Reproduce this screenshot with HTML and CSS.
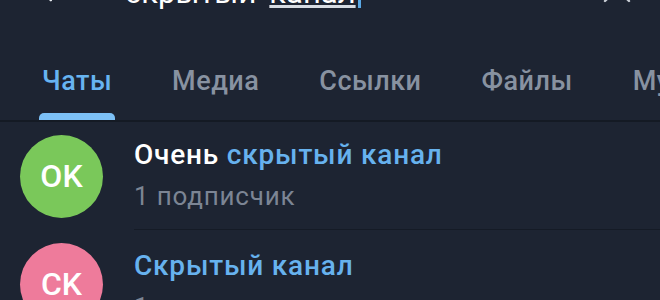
FILE: index.html
```html
<!DOCTYPE html>
<html lang="ru">
<head>
<meta charset="utf-8">
<link rel="stylesheet" href="styles.css">
</head>
<body>
<div class="page">
  <div class="header">
    <div class="bar">
      <svg class="back" width="28" height="28" viewBox="0 0 24 24"><path d="M20 12H4M11 5l-7 7 7 7" fill="none" stroke="#e8ecf1" stroke-width="2" stroke-linecap="round" stroke-linejoin="round"/></svg>
      <div class="query">скрытый <span class="under">канал</span><span class="cursor"></span></div>
      <svg class="clear" width="36" height="36" viewBox="0 0 24 24"><path d="M4 4l16 16M20 4L4 20" fill="none" stroke="#c9ced6" stroke-width="1.6" stroke-linecap="round"/></svg>
    </div>
  </div>
  <div class="tabs">
    <div class="tab active"><span class="tab-label">Чаты</span><span class="indicator"></span></div>
    <div class="tab"><span class="tab-label">Медиа</span></div>
    <div class="tab"><span class="tab-label">Ссылки</span></div>
    <div class="tab"><span class="tab-label">Файлы</span></div>
    <div class="tab"><span class="tab-label">Музыка</span></div>
  </div>
  <div class="list">
    <div class="row">
      <div class="avatar green">OK</div>
      <div class="info">
        <div class="title">Очень <span class="hl">скрытый канал</span></div>
        <div class="sub">1 подписчик</div>
      </div>
    </div>
    <div class="row">
      <div class="avatar pink">CK</div>
      <div class="info second">
        <div class="title"><span class="hl">Скрытый канал</span></div>
        <div class="sub">1 подписчик</div>
      </div>
    </div>
  </div>
</div>
</body>
</html>
```
FILE: styles.css
```css
* { box-sizing: border-box; }
html, body { margin: 0; padding: 0; }
body {
  width: 660px;
  height: 300px;
  overflow: hidden;
  background: #1d2432;
  font-family: Roboto, "Noto Sans", sans-serif;
}
.page { width: 660px; }
.header {
  height: 12px;
  overflow: hidden;
}
.bar {
  height: 60px;
  margin-top: -37px;
  display: flex;
  align-items: center;
  padding-left: 38px;
}
.back { flex: none; margin-top: -2px; }
.query {
  margin-left: 59px;
  font-size: 31px;
  line-height: 36px;
  color: #ffffff;
  white-space: nowrap;
  display: flex;
  align-items: center;
}
.query .under {
  margin-left: 13px;
  text-decoration: underline;
  text-decoration-color: #d6dbe2;
  text-underline-offset: 2px;
}
.cursor {
  display: inline-block;
  width: 3px;
  height: 34px;
  margin-left: 2px;
  margin-top: -4px;
  background: #5aa9e6;
}
.clear { margin-left: auto; flex: none; margin-right: 25px; margin-top: -8px; }

.tabs {
  display: flex;
  padding-left: 12px;
  margin-top: 54px;
  height: 56px;
  border-bottom: 2px solid #141a24;
  white-space: nowrap;
  overflow: hidden;
}
.tab {
  display: flex;
  flex-direction: column;
  align-items: stretch;
  padding: 0 30px;
  flex: none;
}
.tab-label {
  font-size: 27px;
  font-weight: 500;
  line-height: 30px;
  letter-spacing: 0.5px;
  color: #8892a1;
}
.tab.active .tab-label { color: #67b4f1; }
.indicator {
  margin: 17px -3px 0;
  height: 8px;
  background: #7cc0f6;
  border-radius: 5px 5px 0 0;
}

.list { display: flex; flex-direction: column; }
.row {
  display: flex;
  align-items: center;
  height: 108px;
  padding-left: 20px;
  gap: 31px;
}
.avatar {
  width: 83px;
  height: 83px;
  border-radius: 50%;
  flex: none;
  display: flex;
  align-items: center;
  justify-content: center;
  color: #ffffff;
  font-size: 32px;
  font-weight: 500;
}
.green { background: #7ac85a; }
.pink { background: #ee7b9b; }
.info {
  flex: 1;
  height: 108px;
  display: flex;
  flex-direction: column;
  justify-content: center;
  gap: 11px;
  border-bottom: 1px solid #151b26;
}
.info.second { padding-top: 6px; }
.title {
  font-size: 28px;
  font-weight: 500;
  line-height: 30px;
  letter-spacing: 0.8px;
  color: #ffffff;
  white-space: nowrap;
}
.hl { color: #67b2ee; }
.sub {
  font-size: 26px;
  line-height: 30px;
  letter-spacing: 0.8px;
  color: #7c8594;
}
```
